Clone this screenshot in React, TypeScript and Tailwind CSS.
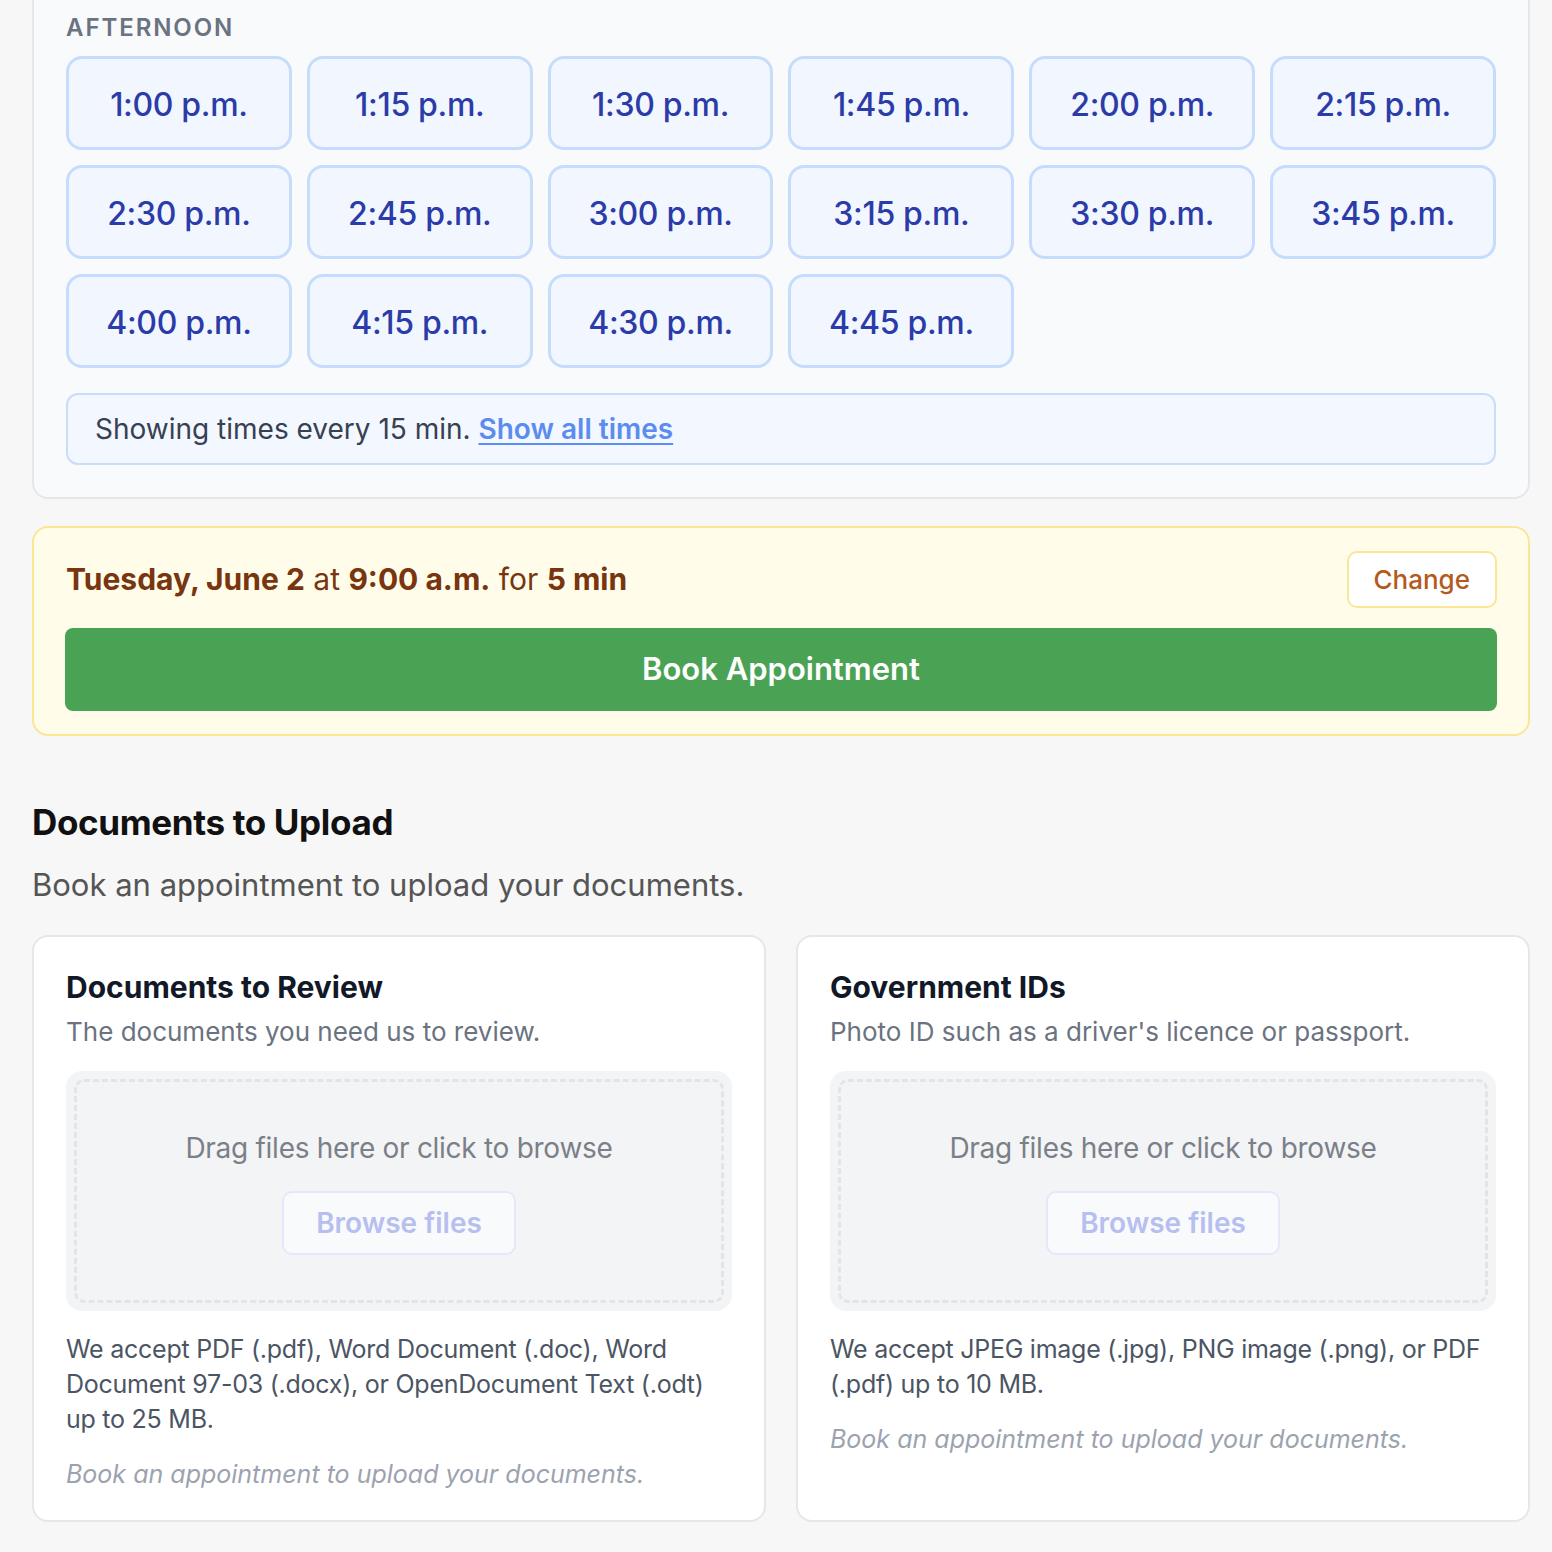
import React from "react";

const times = [
  "1:00 p.m.",
  "1:15 p.m.",
  "1:30 p.m.",
  "1:45 p.m.",
  "2:00 p.m.",
  "2:15 p.m.",
  "2:30 p.m.",
  "2:45 p.m.",
  "3:00 p.m.",
  "3:15 p.m.",
  "3:30 p.m.",
  "3:45 p.m.",
  "4:00 p.m.",
  "4:15 p.m.",
  "4:30 p.m.",
  "4:45 p.m.",
];

type UploadCardProps = {
  title: string;
  subtitle: string;
  accept: string;
};

const UploadCard = ({ title, subtitle, accept }: UploadCardProps) => {
  return (
    <div className="rounded-[16px] border-2 border-[#e5e7eb] bg-white px-[32px] pt-[32px] pb-[28px]">
      <h3 className="text-[30px] font-bold leading-[36px] text-[#111827]">{title}</h3>
      <p className="mt-[9px] text-[26px] leading-[36px] text-[#6b7280]">{subtitle}</p>
      <div className="mt-[21px] rounded-[16px] bg-[#f3f4f6] p-[8px]">
        <div className="flex flex-col items-center rounded-[10px] border-[3px] border-dashed border-[#e2e4e8] pt-[49px] pb-[45px]">
          <p className="text-[28px] leading-[34px] tracking-[-0.01em] text-[#7b8088]">
            Drag files here or click to browse
          </p>
          <button
            disabled
            className="mt-[26px] h-[64px] rounded-[10px] border-2 border-[#e3e9fb] bg-[#f9fafb] px-[32px] text-[28px] font-semibold text-[#b7bef0]"
          >
            Browse files
          </button>
        </div>
      </div>
      <p className="mt-[21px] text-[25px] leading-[35px] tracking-[-0.01em] text-[#4b5563]">
        {accept}
      </p>
      <p className="mt-[20px] text-[25px] italic leading-[35px] text-[#9ca3af]">
        Book an appointment to upload your documents.
      </p>
    </div>
  );
};

export default function App() {
  return (
    <div
      className="min-h-[1552px] overflow-hidden bg-[#f7f7f7] pl-[32px]"
      style={{ fontFamily: "Inter, 'Noto Sans', sans-serif" }}
    >
      <div className="w-[1498px]">
        {/* time picker */}
        <div className="-mt-[19px] rounded-b-[16px] border-2 border-[#e5e7eb] bg-[#f9fafb] p-[32px]">
          <div className="mb-[15px] text-[24px] font-semibold leading-[26px] tracking-[0.08em] text-[#6b7280]">
            AFTERNOON
          </div>
          <div className="grid grid-cols-6 gap-[15px]">
            {times.map((t) => (
              <button
                key={t}
                className="h-[94px] rounded-[16px] border-[3px] border-[#c6dcfd] bg-[#f1f6ff] pt-[3px] text-[32px] font-medium tracking-[-0.01em] text-[#2b3ba7]"
              >
                {t}
              </button>
            ))}
          </div>
          <div className="mt-[25px] flex h-[72px] items-center rounded-[12px] border-2 border-[#c9ddfb] bg-[#f3f7ff] px-[27px] text-[28px] text-[#374151]">
            Showing times every 15 min.&nbsp;
            <a href="#" className="font-semibold text-[#5b8cf0] underline underline-offset-[4px]">
              Show all times
            </a>
          </div>
        </div>

        {/* selection summary */}
        <div className="mt-[27px] rounded-[16px] border-2 border-[#fbe596] bg-[#fffde9] px-[31px] py-[23px]">
          <div className="flex items-center justify-between">
            <p className="pl-[1px] text-[30px] text-[#78350f]">
              <span className="font-bold">Tuesday, June 2</span> at{" "}
              <span className="font-bold">9:00 a.m.</span> for{" "}
              <span className="font-bold">5 min</span>
            </p>
            <button className="h-[57px] rounded-[10px] border-2 border-[#fbe596] bg-white px-[25px] text-[26px] font-medium text-[#b45a1c]">
              Change
            </button>
          </div>
          <button className="mt-[20px] h-[83px] w-full rounded-[8px] bg-[#4aa354] text-[31px] font-semibold text-white">
            Book Appointment
          </button>
        </div>

        {/* documents */}
        <h2 className="mt-[64px] text-[35px] font-bold leading-[44px] tracking-[-0.01em] text-[#111111]">
          Documents to Upload
        </h2>
        <p className="mt-[22px] text-[31px] leading-[38px] text-[#555555]">
          Book an appointment to upload your documents.
        </p>
        <div className="mt-[31px] grid grid-cols-2 gap-[30px]">
          <UploadCard
            title="Documents to Review"
            subtitle="The documents you need us to review."
            accept="We accept PDF (.pdf), Word Document (.doc), Word Document 97-03 (.docx), or OpenDocument Text (.odt) up to 25 MB."
          />
          <UploadCard
            title="Government IDs"
            subtitle="Photo ID such as a driver's licence or passport."
            accept="We accept JPEG image (.jpg), PNG image (.png), or PDF (.pdf) up to 10 MB."
          />
        </div>
      </div>
    </div>
  );
}
